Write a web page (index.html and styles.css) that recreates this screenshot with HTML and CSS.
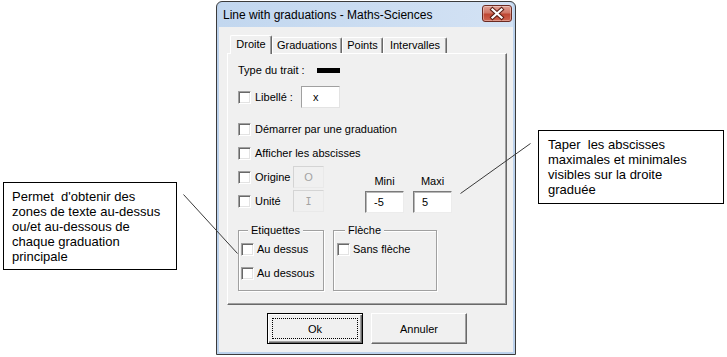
FILE: index.html
```html
<!DOCTYPE html>
<html lang="fr">
<head>
<meta charset="utf-8">
<title>Line with graduations - Maths-Sciences</title>
<link rel="stylesheet" href="styles.css">
</head>
<body>
<div class="desktop">
  <div class="callout callout-left">Permet  d'obtenir des
zones de texte au-dessus
ou/et au-dessous de
chaque graduation
principale</div>
  <div class="callout callout-right">Taper  les abscisses
maximales et minimales
visibles sur la droite
graduée</div>

  <div class="window">
    <div class="titlebar">
      <span class="title">Line with graduations - Maths-Sciences</span>
      <button class="close" aria-label="Fermer">
        <svg width="30" height="17" viewBox="0 0 30 17">
          <path d="M10.5 4.5 L19.5 12.5 M19.5 4.5 L10.5 12.5" stroke="#5a1d14" stroke-width="4.2" stroke-linecap="square" fill="none"/>
          <path d="M10.5 4.5 L19.5 12.5 M19.5 4.5 L10.5 12.5" stroke="#ffffff" stroke-width="2.2" stroke-linecap="square" fill="none"/>
        </svg>
      </button>
    </div>
    <div class="client">
      <div class="tabs">
        <div class="tab tab-active">Droite</div>
        <div class="tab tab-grad">Graduations</div>
        <div class="tab tab-points">Points</div>
        <div class="tab tab-inter">Intervalles</div>
      </div>
      <div class="panel">
        <div class="row row-type">
          <span class="lbl-type">Type du trait :</span>
          <span class="swatch"></span>
        </div>
        <div class="row row-libelle">
          <span class="cb"></span>
          <span class="lbl lbl-libelle">Libellé :</span>
          <span class="field field-libelle">x</span>
        </div>
        <div class="row row-check row-demarrer">
          <span class="cb"></span>
          <span class="lbl">Démarrer par une graduation</span>
        </div>
        <div class="row row-check row-afficher">
          <span class="cb"></span>
          <span class="lbl">Afficher les abscisses</span>
        </div>
        <div class="coords">
          <div class="coords-left">
            <div class="row row-field">
              <span class="cb"></span>
              <span class="lbl lbl-coord">Origine</span>
              <span class="field field-disabled">O</span>
            </div>
            <div class="row row-field row-unite">
              <span class="cb"></span>
              <span class="lbl lbl-coord">Unité</span>
              <span class="field field-disabled field-serif">I</span>
            </div>
          </div>
          <div class="coords-right">
            <div class="minmax">
              <span class="mm-label">Mini</span>
              <span class="field field-mm">-5</span>
            </div>
            <div class="minmax">
              <span class="mm-label">Maxi</span>
              <span class="field field-mm">5</span>
            </div>
          </div>
        </div>
        <div class="groups">
          <div class="group group-etiq">
            <span class="legend">Etiquettes</span>
            <div class="grow">
              <span class="cb"></span>
              <span class="glbl">Au dessus</span>
            </div>
            <div class="grow grow-second">
              <span class="cb"></span>
              <span class="glbl">Au dessous</span>
            </div>
          </div>
          <div class="group group-fleche">
            <span class="legend">Flèche</span>
            <div class="grow">
              <span class="cb"></span>
              <span class="glbl">Sans flèche</span>
            </div>
          </div>
        </div>
      </div>
      <div class="buttons">
        <button class="btn btn-default"><span class="focus">Ok</span></button>
        <button class="btn">Annuler</button>
      </div>
    </div>
  </div>

  <svg class="leaders" width="727" height="357" viewBox="0 0 727 357">
    <line x1="183.5" y1="194.5" x2="237.5" y2="253.5" stroke="#3a3a3a" stroke-width="1"/>
    <line x1="530.5" y1="143.5" x2="460.5" y2="193.5" stroke="#3a3a3a" stroke-width="1"/>
  </svg>
</div>
</body>
</html>
```

FILE: styles.css
```css
* {
  box-sizing: border-box;
}

html,
body {
  margin: 0;
  padding: 0;
}

body {
  width: 727px;
  height: 357px;
  overflow: hidden;
  background: #ffffff;
  font-family: "Liberation Sans", Arial, sans-serif;
  color: #000000;
}

.desktop {
  position: relative;
  width: 727px;
  height: 357px;
}

/* ---------- callouts ---------- */
.callout {
  position: absolute;
  background: #ffffff;
  border: 1px solid #000000;
  font-family: "Liberation Sans", Arial, sans-serif;
  font-size: 13px;
  line-height: 15px;
  white-space: pre;
  color: #000000;
  padding: 6px 0 0 8px;
}

.callout-left {
  left: 3px;
  top: 182px;
  width: 174px;
  height: 88px;
}

.callout-right {
  left: 538px;
  top: 130px;
  width: 186px;
  height: 74px;
  padding-left: 9px;
}

.leaders {
  position: absolute;
  left: 0;
  top: 0;
  z-index: 5;
  pointer-events: none;
}

/* ---------- window ---------- */
.window {
  position: absolute;
  left: 216px;
  top: 1px;
  width: 300px;
  height: 354px;
  border: 1px solid #3b3b3b;
  border-radius: 6px 6px 0 0;
  background: #bcd2ec;
  padding: 0 2px 2px;
  display: flex;
  flex-direction: column;
}

.titlebar {
  height: 25px;
  display: flex;
  align-items: flex-start;
  justify-content: space-between;
  padding-left: 4px;
  background: linear-gradient(to right, #c2d7ef 0%, #d3e2f4 100%);
  border-radius: 5px 5px 0 0;
}

.title {
  font-family: "Liberation Sans", Arial, sans-serif;
  font-size: 12px;
  line-height: 14px;
  margin-top: 6px;
  color: #000000;
}

.close {
  width: 30px;
  height: 17px;
  margin: 3px 1px 0 0;
  padding: 0;
  border: 1px solid #6b2a22;
  border-radius: 3px;
  background: linear-gradient(to bottom, #e0a094 0%, #d07767 45%, #bf4733 55%, #cf6450 100%);
  box-shadow: inset 0 0 0 1px rgba(255, 255, 255, 0.35);
  display: flex;
  align-items: center;
  justify-content: center;
}

.close svg {
  display: block;
  margin: -1px;
}

.client {
  flex: 1;
  background: #f0f0f0;
  font-family: "Liberation Sans", Arial, sans-serif;
  font-size: 11px;
  line-height: 13px;
}

/* ---------- tabs ---------- */
.tabs {
  position: relative;
  z-index: 1;
  display: flex;
  align-items: flex-end;
  height: 18px;
  margin-top: 8px;
  padding-left: 11px;
}

.tab {
  height: 16px;
  padding-top: 1px;
  text-align: center;
  border-top: 1px solid #ffffff;
  border-left: 1px solid #ffffff;
  border-right: 1px solid #696969;
  box-shadow: inset -1px 0 0 #a0a0a0;
  border-radius: 2px 2px 0 0;
  background: #f0f0f0;
}

.tab-active {
  width: 42px;
  height: 19px;
  padding-top: 2px;
  margin-bottom: -1px;
}

.tab-grad {
  width: 70px;
}

.tab-points {
  width: 41px;
}

.tab-inter {
  width: 64px;
}

/* ---------- panel ---------- */
.panel {
  width: 280px;
  height: 252px;
  margin-left: 8px;
  border: 1px solid;
  border-color: #ffffff #696969 #696969 #ffffff;
  box-shadow: inset -1px -1px 0 #a0a0a0;
  padding-left: 10px;
}

.row {
  display: flex;
  align-items: center;
}

.row-type {
  height: 14px;
  margin-top: 9px;
}

.lbl-type {
  width: 79px;
}

.swatch {
  width: 23px;
  height: 5px;
  background: #000000;
}

.cb {
  flex: none;
  width: 13px;
  height: 13px;
  background: #ffffff;
  border: 1px solid;
  border-color: #a0a0a0 #ffffff #ffffff #a0a0a0;
  box-shadow: inset 1px 1px 0 #696969, inset -1px -1px 0 #e3e3e3;
}

.lbl {
  margin-left: 4px;
}

.row-libelle {
  height: 22px;
  margin-top: 9px;
}

.lbl-libelle {
  width: 46px;
}

.field {
  display: flex;
  align-items: center;
  height: 22px;
  background: #ffffff;
  border: 1px solid;
  border-color: #a0a0a0 #e3e3e3 #e3e3e3 #a0a0a0;
}

.field-libelle {
  width: 39px;
  padding-left: 11px;
}

.row-check {
  height: 13px;
}

.row-demarrer {
  margin-top: 15px;
}

.row-afficher {
  margin-top: 11px;
}

/* ---------- coordinates ---------- */
.coords {
  display: flex;
  margin-top: 6px;
}

.coords-left {
  width: 86px;
}

.row-field {
  height: 22px;
}

.row-unite {
  margin-top: 2px;
}

.lbl-coord {
  width: 38px;
}

.field-disabled {
  width: 31px;
  justify-content: center;
  background: #f0f0f0;
  border-color: #d4d4d4 #e9e9e9 #e9e9e9 #d4d4d4;
  color: #a3a3a3;
}

.field-serif {
  font-family: "DejaVu Sans Mono", "Liberation Mono", monospace;
  font-size: 10px;
}

.coords-right {
  display: flex;
  gap: 9px;
  margin-left: 41px;
  margin-top: 9px;
}

.minmax {
  display: flex;
  flex-direction: column;
  align-items: center;
  gap: 3px;
}

.field-mm {
  width: 39px;
  padding-left: 8px;
  border-color: #7a7a7a #ececec #ececec #7a7a7a;
  box-shadow: inset 1px 1px 0 #b8b8b8;
}

/* ---------- group boxes ---------- */
.groups {
  display: flex;
  gap: 9px;
  margin-top: 17px;
}

.group {
  position: relative;
  height: 61px;
  border: 1px solid #a0a0a0;
  box-shadow: inset 1px 1px 0 #ffffff, 1px 1px 0 #ffffff;
  padding-top: 12px;
}

.group-etiq {
  width: 86px;
  padding-left: 2px;
}

.group-fleche {
  width: 104px;
  padding-left: 3px;
}

.legend {
  position: absolute;
  top: -7px;
  left: 9px;
  padding: 0 3px;
  background: #f0f0f0;
}

.group-fleche .legend {
  left: 11px;
}

.grow {
  display: flex;
  align-items: center;
  height: 13px;
}

.grow-second {
  margin-top: 11px;
}

.glbl {
  margin-left: 3px;
}

/* ---------- buttons ---------- */
.buttons {
  display: flex;
  gap: 8px;
  margin-top: 8px;
  padding-left: 48px;
}

.btn {
  width: 96px;
  height: 31px;
  padding: 0;
  font-family: "Liberation Sans", Arial, sans-serif;
  font-size: 11px;
  color: #000000;
  background: #f0f0f0;
  border: 1px solid;
  border-color: #ffffff #696969 #696969 #ffffff;
  box-shadow: inset -1px -1px 0 #a0a0a0;
}

.btn-default {
  border: 1px solid #000000;
  box-shadow: inset 1px 1px 0 #ffffff, inset -1px -1px 0 #696969, inset -2px -2px 0 #a0a0a0;
  display: flex;
  align-items: center;
  justify-content: center;
}

.focus {
  display: flex;
  align-items: center;
  justify-content: center;
  width: 86px;
  height: 21px;
  border: 1px dotted #000000;
}
```
